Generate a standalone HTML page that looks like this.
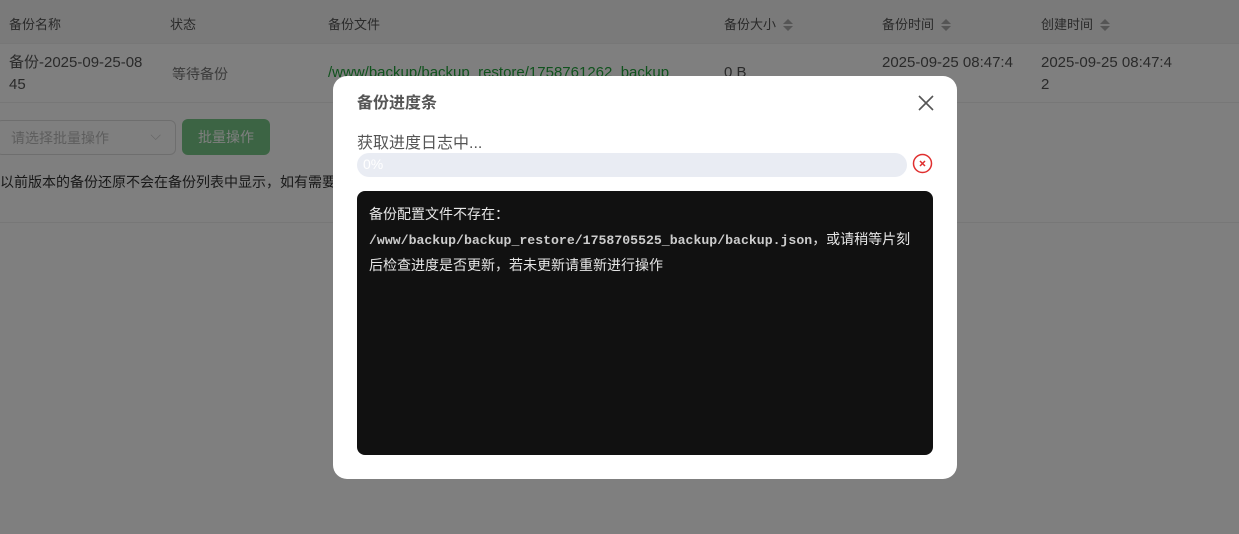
<!DOCTYPE html>
<html><head><meta charset="utf-8"><style>
*{margin:0;padding:0;box-sizing:border-box}
body{width:1239px;height:534px;overflow:hidden;background:#fff;font-family:"Liberation Sans","Noto Sans CJK SC",sans-serif;position:relative}
.a{position:absolute;white-space:nowrap}
.hd{position:absolute;left:0;top:0;width:1239px;height:44px;background:#f5f5f5;border-bottom:1px solid #eee}
.th{font-size:13px;color:#555;top:14px}
.td{font-size:15px;color:#555}
.sort{display:inline-block;vertical-align:middle;margin-left:7px;width:10px;height:14px;position:relative}
.sort:before,.sort:after{content:"";position:absolute;left:0;border-left:5px solid transparent;border-right:5px solid transparent}
.sort:before{top:0;border-bottom:5px solid #aaa}
.sort:after{top:7px;border-top:5px solid #aaa}
.ov{position:absolute;left:0;top:0;width:1239px;height:534px;background:rgba(0,0,0,.5)}
.dlg{position:absolute;left:333px;top:76px;width:624px;height:403px;background:#fff;border-radius:14px}
.term{position:absolute;left:24px;top:115px;width:576px;height:264px;background:#111;border-radius:8px;color:#e6e6e6;font-size:14px;padding:11px 12px;line-height:25px;font-family:"Liberation Sans","Noto Sans CJK SC",sans-serif}
.mono{font-family:"Liberation Mono","DejaVu Sans Mono",monospace;font-size:13.2px;font-weight:bold;color:#ccc}
</style></head><body>
<div class="hd"></div>
<div class="a th" style="left:9px">备份名称</div>
<div class="a th" style="left:170px">状态</div>
<div class="a th" style="left:328px">备份文件</div>
<div class="a th" style="left:724px">备份大小<span class="sort"></span></div>
<div class="a th" style="left:882px">备份时间<span class="sort"></span></div>
<div class="a th" style="left:1041px">创建时间<span class="sort"></span></div>
<div class="a td" style="left:9px;top:52px;line-height:22px">备份-2025-09-25-08<br>45</div>
<div class="a td" style="left:172px;top:64px;font-size:14px;color:#777">等待备份</div>
<div class="a td" style="left:328px;top:64px;color:#20a53a">/www/backup/backup_restore/1758761262_backup</div>
<div class="a td" style="left:724px;top:64px">0 B</div>
<div class="a td" style="left:882px;top:52px;line-height:22px">2025-09-25 08:47:4<br>2</div>
<div class="a td" style="left:1041px;top:52px;line-height:22px">2025-09-25 08:47:4<br>2</div>
<div class="a" style="left:0;top:102px;width:1239px;border-top:1px solid #eee"></div>
<div class="a" style="left:-4px;top:120px;width:180px;height:35px;border:1px solid #ddd;border-radius:6px;font-size:14px;color:#bbb;padding:7px 14px">请选择批量操作<span style="position:absolute;right:14px;top:6px;color:#ccc">⌵</span></div>
<div class="a" style="left:182px;top:119px;width:88px;height:36px;background:#20a53a;border-radius:6px;color:#fff;font-size:14px;text-align:center;line-height:36px;opacity:.6">批量操作</div>
<div class="a" style="left:0;top:172px;font-size:14px;color:#333">以前版本的备份还原不会在备份列表中显示，如有需要</div>
<div class="a" style="left:0;top:222px;width:1239px;border-top:1px solid #eee"></div>
<div class="ov"></div>
<div class="dlg">
<div class="a" style="left:24px;top:13px;font-size:16px;font-weight:bold;color:#555">备份进度条</div>
<svg class="a" style="left:584px;top:18px" width="18" height="18" viewBox="0 0 18 18"><path d="M2 2L16 16M16 2L2 16" stroke="#555" stroke-width="1.6"/></svg>
<div class="a" style="left:24px;top:53px;font-size:16px;color:#555">获取进度日志中...</div>
<div class="a" style="left:24px;top:77px;width:550px;height:24px;background:#e9ecf3;border-radius:12px;color:#fff;font-size:14px;padding-left:6px;line-height:22px">0%</div>
<svg class="a" style="left:579px;top:77px" width="21" height="21" viewBox="0 0 21 21"><circle cx="10.5" cy="10.5" r="9" fill="none" stroke="#e02f2f" stroke-width="1.5"/><path d="M8 8L13 13M13 8L8 13" stroke="#e02f2f" stroke-width="1.5"/></svg>
<div class="term">备份配置文件不存在：<br><span class="mono">/www/backup/backup_restore/1758705525_backup/backup.json</span>，或请稍等片刻<br>后检查进度是否更新，若未更新请重新进行操作</div>
</div>
</body></html>
